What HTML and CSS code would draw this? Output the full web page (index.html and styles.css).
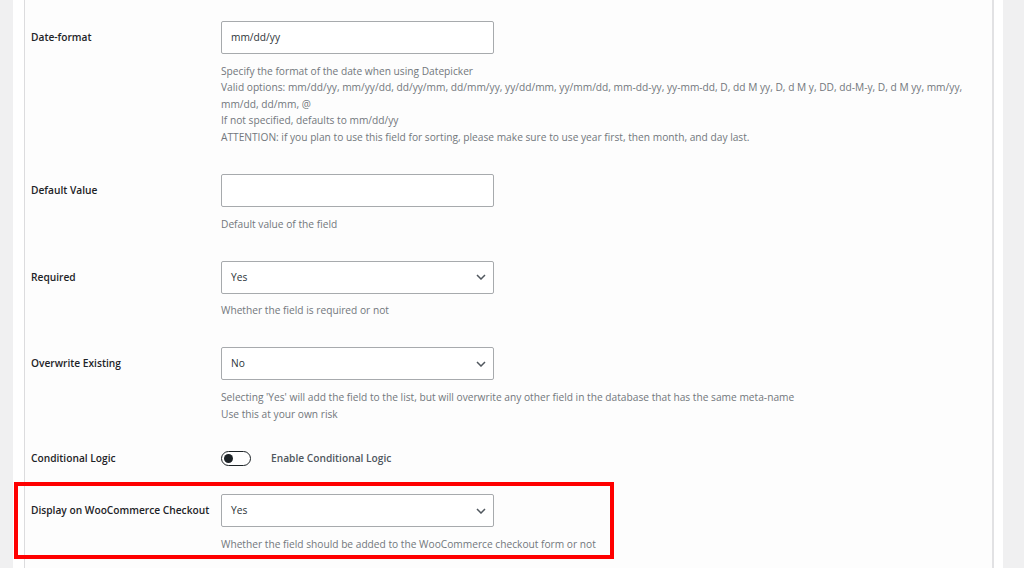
FILE: index.html
```html
<!DOCTYPE html>
<html lang="en">
<head>
<meta charset="utf-8">
<title>Field settings</title>
<link rel="stylesheet" href="styles.css">
</head>
<body>
<div class="wrap">
  <div class="panel">
    <div class="row">
      <div class="label">Date-format</div>
      <div class="field">
        <div class="input">mm/dd/yy</div>
        <p class="desc">Specify the format of the date when using Datepicker<br>Valid options: mm/dd/yy, mm/yy/dd, dd/yy/mm, dd/mm/yy, yy/dd/mm, yy/mm/dd, mm-dd-yy, yy-mm-dd, D, dd M yy, D, d M y, DD, dd-M-y, D, d M yy, mm/yy,<br>mm/dd, dd/mm, @<br>If not specified, defaults to mm/dd/yy<br>ATTENTION: if you plan to use this field for sorting, please make sure to use year first, then month, and day last.</p>
      </div>
    </div>
    <div class="row">
      <div class="label">Default Value</div>
      <div class="field">
        <div class="input"></div>
        <p class="desc">Default value of the field</p>
      </div>
    </div>
    <div class="row">
      <div class="label">Required</div>
      <div class="field">
        <div class="input select"><span>Yes</span><svg class="chev" width="10" height="6" viewBox="0 0 10 6"><path d="M1 1l4 4 4-4" fill="none" stroke="#50575e" stroke-width="1.5"/></svg></div>
        <p class="desc">Whether the field is required or not</p>
      </div>
    </div>
    <div class="row">
      <div class="label">Overwrite Existing</div>
      <div class="field">
        <div class="input select"><span>No</span><svg class="chev" width="10" height="6" viewBox="0 0 10 6"><path d="M1 1l4 4 4-4" fill="none" stroke="#50575e" stroke-width="1.5"/></svg></div>
        <p class="desc">Selecting 'Yes' will add the field to the list, but will overwrite any other field in the database that has the same meta-name<br>Use this at your own risk</p>
      </div>
    </div>
    <div class="row row-toggle">
      <div class="label label-toggle">Conditional Logic</div>
      <div class="field toggle-field">
        <span class="toggle"><span class="knob"></span></span>
        <span class="toggle-text">Enable Conditional Logic</span>
      </div>
    </div>
    <div class="row highlight">
      <div class="label">Display on WooCommerce Checkout</div>
      <div class="field">
        <div class="input select"><span>Yes</span><svg class="chev" width="10" height="6" viewBox="0 0 10 6"><path d="M1 1l4 4 4-4" fill="none" stroke="#50575e" stroke-width="1.5"/></svg></div>
        <p class="desc">Whether the field should be added to the WooCommerce checkout form or not</p>
      </div>
    </div>
  </div>
</div>
</body>
</html>
```
FILE: styles.css
```css
html, body {
  margin: 0;
  padding: 0;
  height: 100%;
  overflow: hidden;
}
body {
  background: #f0f0f1;
  font-family: "Open Sans", "Noto Sans", sans-serif;
  font-size: 10.2px;
  color: #1d2327;
}
.wrap {
  margin-left: 13px;
  width: 990px;
  height: 100%;
  background: #ffffff;
}
.panel {
  margin-left: 11px;
  width: 970px;
  height: 100%;
  box-sizing: border-box;
  background: #fdfdfd;
  border-left: 1px solid #dcdcde;
  border-right: 2px solid #e2e2e4;
  padding: 21px 0 0 6px;
}
.row {
  display: flex;
  margin-bottom: 28.5px;
  position: relative;
}
.label {
  width: 190px;
  flex: none;
  line-height: 33px;
  font-weight: 600;
  color: #1d2327;
  font-size: 10.2px;
}
.field {
  width: 764px;
}
.input {
  width: 273px;
  height: 33px;
  box-sizing: border-box;
  border: 1px solid #a7aaad;
  border-radius: 2px;
  background: #fff;
  padding: 0 9px;
  line-height: 31px;
  color: #2c3338;
  font-size: 10.2px;
}
.select {
  display: flex;
  align-items: center;
  justify-content: space-between;
  padding-right: 7px;
}
.chev {
  display: block;
}
.desc {
  margin: 8.75px 0 0;
  line-height: 16.5px;
  color: #72777c;
  font-size: 10.2px;
}
.row-toggle {
  align-items: center;
  height: 15px;
}
.label-toggle {
  line-height: 15px;
}
.toggle-field {
  display: flex;
  align-items: center;
}
.toggle {
  width: 30px;
  height: 15px;
  box-sizing: border-box;
  border: 1.5px solid #1d2327;
  border-radius: 8px;
  display: flex;
  align-items: center;
  padding-left: 2px;
  background: #fff;
}
.knob {
  width: 9px;
  height: 9px;
  border-radius: 50%;
  background: #1d2327;
}
.toggle-text {
  margin-left: 20px;
  font-weight: 600;
  color: #50575e;
}
.highlight::before {
  content: "";
  position: absolute;
  left: -17px;
  top: -12px;
  width: 600px;
  height: 77px;
  box-sizing: border-box;
  border: 4px solid #f00;
  pointer-events: none;
}
```
